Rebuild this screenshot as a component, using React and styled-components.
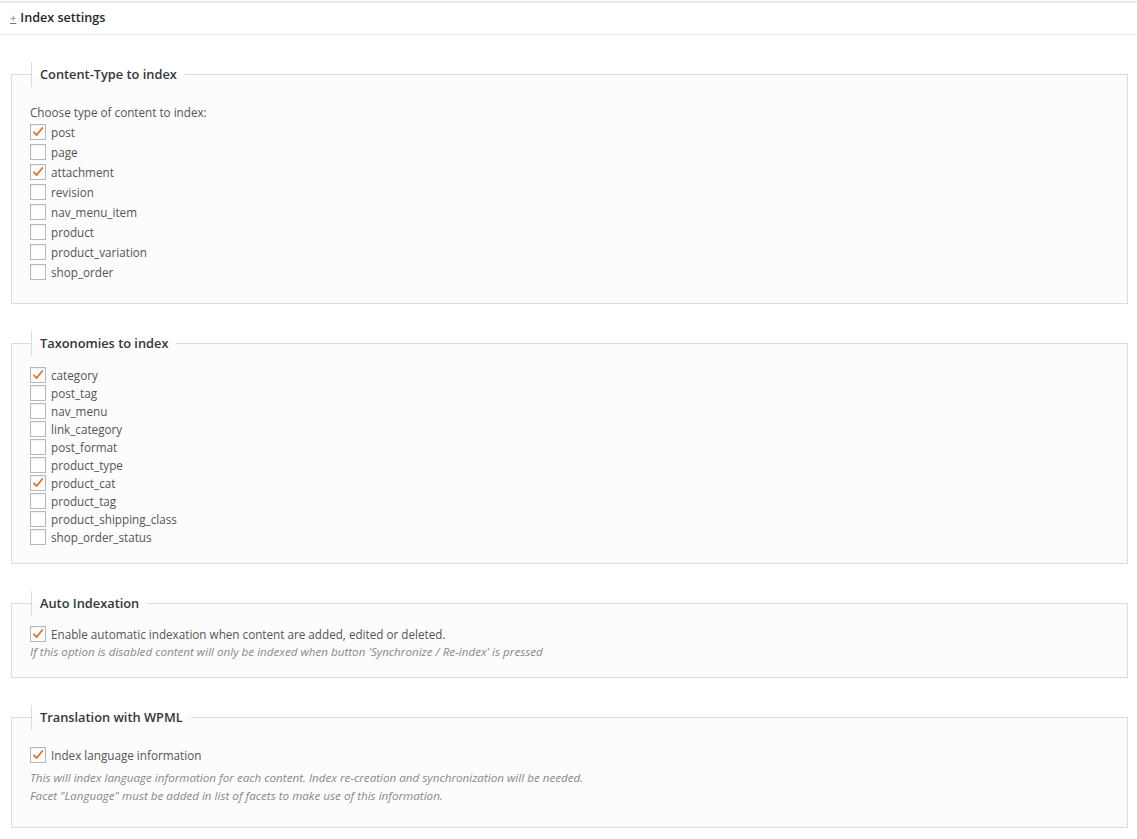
import React from 'react'
import styled, { createGlobalStyle } from 'styled-components'

const GlobalStyle = createGlobalStyle`
body {
  margin: 0;
  background: #fff;
  font-family: 'Open Sans', 'Liberation Sans', sans-serif;
  font-size: 11.7px;
  color: #555;
}
`

const Page = styled.div`
width: 1137px;
padding-top: 1px;
`

const Header = styled.div`
display: flex;
align-items: center;
gap: 4px;
height: 29px;
padding: 0 10px 2px;
border-top: 2px solid #e8e8e8;
border-bottom: 1px solid #eaeaea;
color: #23282d;
font-weight: 600;
font-size: 12.6px;
`

const Toggle = styled.span`
font-size: 11px;
font-weight: 400;
color: #777;
text-decoration: underline;
`

const Content = styled.div`
padding: 27px 9px 0 11px;
display: flex;
flex-direction: column;
gap: 27px;
`

const Box = styled.fieldset`
margin: 0;
padding: ${p => p.$pad || '10px 18px 17px'};
border: 1px solid #dcdcdc;
background: #fcfcfc;
min-width: 0;
`

const Legend = styled.legend`
margin-left: 1px;
padding: 0 8px;
line-height: 25px;
border-left: 1px solid #dcdcdc;
color: #32373c;
font-weight: 600;
font-size: 12.8px;
`

const Intro = styled.div`
line-height: 20px;
margin-top: 6px;
`

const Row = styled.label`
display: flex;
align-items: center;
gap: 5px;
height: ${p => p.$h || 18}px;
`

const Tick = styled.span`
width: 14px;
height: 14px;
flex: none;
border: 1px solid #b4b9be;
background: #fff;
box-shadow: inset 0 1px 2px rgba(0,0,0,.07);
display: flex;
align-items: center;
justify-content: center;
`

const Note = styled.div`
font-style: italic;
color: #888;
font-size: 11.65px;
line-height: 18px;
`

const Block = styled.div`
margin: ${p => p.$m || '0'};
`

const Check = ({ on, label, h }) => (
  <Row $h={h}>
    <Tick>
      {on && (
        <svg width="12" height="12" viewBox="0 0 12 12">
          <path d="M2 6.4 L4.7 9 L10.3 2" fill="none" stroke="#e07a35" strokeWidth="2" strokeLinejoin="round" strokeLinecap="round" />
        </svg>
      )}
    </Tick>
    {label}
  </Row>
)

const types = [
  ['post', true], ['page', false], ['attachment', true], ['revision', false],
  ['nav_menu_item', false], ['product', false], ['product_variation', false], ['shop_order', false],
]

const taxonomies = [
  ['category', true], ['post_tag', false], ['nav_menu', false], ['link_category', false],
  ['post_format', false], ['product_type', false], ['product_cat', true], ['product_tag', false],
  ['product_shipping_class', false], ['shop_order_status', false],
]

export default function App() {
  return (
    <Page>
      <GlobalStyle />
      <Header>
        <Toggle>+</Toggle>
        Index settings
      </Header>
      <Content>
        <Box $pad="9px 18px 21px">
          <Legend>Content-Type to index</Legend>
          <Intro>Choose type of content to index:</Intro>
          {types.map(([t, on]) => <Check key={t} on={on} label={t} h={20} />)}
        </Box>
        <Box>
          <Legend>Taxonomies to index</Legend>
          {taxonomies.map(([t, on]) => <Check key={t} on={on} label={t} />)}
        </Box>
        <Box $pad="9px 18px 16px">
          <Legend>Auto Indexation</Legend>
          <Check on label="Enable automatic indexation when content are added, edited or deleted." />
          <Note>If this option is disabled content will only be indexed when button 'Synchronize / Re-index' is pressed</Note>
        </Box>
        <Box $pad="16px 18px 22px">
          <Legend>Translation with WPML</Legend>
          <Check on label="Index language information" />
          <Block $m="5px 0 0">
            <Note>This will index language information for each content. Index re-creation and synchronization will be needed.</Note>
            <Note>Facet "Language" must be added in list of facets to make use of this information.</Note>
          </Block>
        </Box>
      </Content>
    </Page>
  )
}
